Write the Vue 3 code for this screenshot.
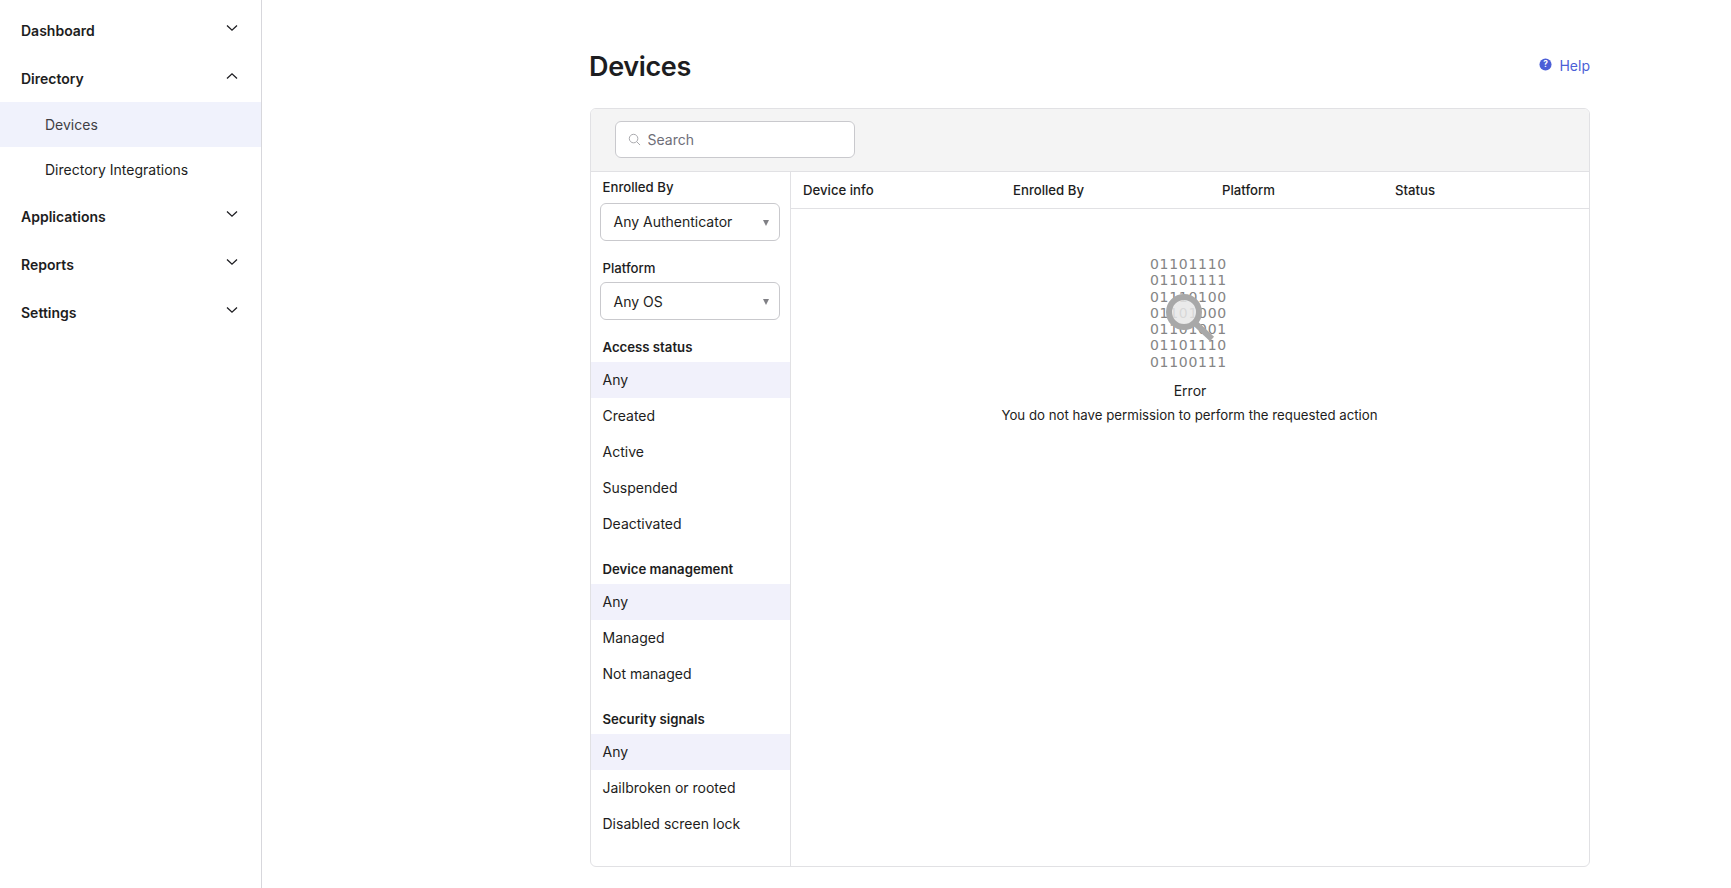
<template>
  <div class="layout">
    <aside class="sidebar">
      <template v-for="item in nav" :key="item.label">
        <div class="nav-head">
          <span>{{ item.label }}</span>
          <svg class="chevron" viewBox="0 0 12 8" :class="{ open: item.children }">
            <path d="M1 1.5 L6 6.2 L11 1.5" fill="none" stroke="#1d1d21" stroke-width="1.3" />
          </svg>
        </div>
        <div
          v-for="(child, i) in item.children"
          :key="child"
          class="nav-sub"
          :class="{ active: i === 0 }"
        >
          {{ child }}
        </div>
      </template>
    </aside>

    <main class="content">
      <div class="page-head">
        <h1>Devices</h1>
        <a class="help">
          <svg class="help-icon" viewBox="0 0 14 14">
            <circle cx="7" cy="7" r="6.5" fill="#4c5fd7" />
            <text x="7" y="10" text-anchor="middle" class="help-mark">?</text>
          </svg>
          Help
        </a>
      </div>

      <section class="panel">
        <div class="toolbar">
          <div class="search">
            <svg class="search-icon" viewBox="0 0 14 14">
              <circle cx="6" cy="6" r="4.6" fill="none" stroke="#a3a3a8" stroke-width="1" />
              <path d="M9.4 9.4 L13 13" stroke="#a3a3a8" stroke-width="1" />
            </svg>
            <input type="text" placeholder="Search" />
          </div>
        </div>

        <div class="panel-body">
          <div class="filters">
            <div class="filter-label first">Enrolled By</div>
            <div class="fake-select">Any Authenticator<span class="caret"></span></div>
            <div class="filter-label second">Platform</div>
            <div class="fake-select">Any OS<span class="caret"></span></div>

            <div v-for="group in filterGroups" :key="group.title" class="filter-group">
              <div class="group-title">{{ group.title }}</div>
              <div
                v-for="(opt, i) in group.options"
                :key="opt"
                class="filter-opt"
                :class="{ selected: i === 0 }"
              >
                {{ opt }}
              </div>
            </div>
          </div>

          <div class="table-area">
            <div class="table-head">
              <div class="col col-info">Device info</div>
              <div class="col col-enrolled">Enrolled By</div>
              <div class="col col-platform">Platform</div>
              <div class="col">Status</div>
            </div>
            <div class="empty">
              <div class="binary-wrap">
                <div v-for="line in binary" :key="line" class="binary-line">{{ line }}</div>
                <svg class="magnifier" viewBox="0 0 50 50">
                  <circle cx="18" cy="18" r="15" fill="#e6e6e6" fill-opacity="0.85" stroke="#a8a8a8" stroke-width="6" />
                  <path d="M30 30 L46 45" stroke="#a8a8a8" stroke-width="6" />
                </svg>
              </div>
              <div class="error-title">Error</div>
              <div class="error-msg">You do not have permission to perform the requested action</div>
            </div>
          </div>
        </div>
      </section>
    </main>
  </div>
</template>

<script setup>
const nav = [
  { label: 'Dashboard' },
  { label: 'Directory', children: ['Devices', 'Directory Integrations'] },
  { label: 'Applications' },
  { label: 'Reports' },
  { label: 'Settings' }
]

const filterGroups = [
  { title: 'Access status', options: ['Any', 'Created', 'Active', 'Suspended', 'Deactivated'] },
  { title: 'Device management', options: ['Any', 'Managed', 'Not managed'] },
  { title: 'Security signals', options: ['Any', 'Jailbroken or rooted', 'Disabled screen lock'] }
]

const binary = ['01101110', '01101111', '01110100', '01101000', '01101001', '01101110 ', '01100111']
</script>

<style>
html,
body {
  margin: 0;
  background: #fff;
  overflow: hidden;
}
</style>

<style scoped>
.layout {
  display: flex;
  height: 888px;
  font-family: Inter, "Noto Sans", sans-serif;
  font-size: 14px;
  color: #1d1d21;
}

.sidebar {
  width: 261px;
  flex-shrink: 0;
  border-right: 1px solid #d7d7dc;
  padding-top: 6px;
}

.nav-head {
  display: flex;
  align-items: center;
  justify-content: space-between;
  height: 48px;
  padding: 0 23px 0 21px;
  font-weight: 600;
}

.chevron {
  width: 12px;
  height: 8px;
  margin-top: -5px;
}

.chevron.open {
  transform: rotate(180deg);
}

.nav-sub {
  display: flex;
  align-items: center;
  height: 45px;
  padding-left: 45px;
}

.nav-sub.active {
  background: #f0f2fc;
  color: #3f3f45;
}

.content {
  flex: 1;
  padding: 0 141px 0 328px;
}

.page-head {
  display: flex;
  align-items: center;
  justify-content: space-between;
  height: 108px;
  padding-top: 32px;
  padding-bottom: 8px;
  box-sizing: border-box;
}

h1 {
  margin: 0 0 0 -1px;
  font-size: 27px;
  font-weight: 600;
  letter-spacing: -0.35px;
}

.help {
  display: flex;
  align-items: center;
  gap: 7px;
  margin-top: -2px;
  color: #4c5fd7;
}

.help-icon {
  width: 13px;
  height: 13px;
  margin-top: -2px;
}

.help-mark {
  fill: #fff;
  font-size: 9px;
  font-weight: 700;
}

.panel {
  height: 759px;
  box-sizing: border-box;
  border: 1px solid #e1e1e4;
  border-radius: 6px;
  overflow: hidden;
  display: flex;
  flex-direction: column;
}

.toolbar {
  height: 63px;
  flex-shrink: 0;
  box-sizing: border-box;
  background: #f4f4f4;
  border-bottom: 1px solid #e1e1e4;
  padding: 12px 24px;
}

.search {
  position: relative;
  width: 240px;
  height: 37px;
}

.search input {
  width: 100%;
  height: 100%;
  box-sizing: border-box;
  border: 1px solid #c9c9cd;
  border-radius: 6px;
  background: #fff;
  padding: 0 10px 0 31.5px;
  font: inherit;
  color: #1d1d21;
  outline: none;
}

.search input::placeholder {
  color: #6e6e78;
  opacity: 1;
}

.search-icon {
  position: absolute;
  left: 13px;
  top: 12px;
  width: 13px;
  height: 13px;
}

.panel-body {
  flex: 1;
  display: flex;
  min-height: 0;
}

.filters {
  width: 199px;
  flex-shrink: 0;
  border-right: 1px solid #e1e1e4;
}

.filter-label {
  padding-left: 11.5px;
  font-size: 13.2px;
  font-weight: 500;
  line-height: 18px;
}

.filter-label.first {
  margin-top: 6px;
  margin-bottom: 6.5px;
}

.filter-label.second {
  margin-top: 18.5px;
  margin-bottom: 5px;
}

.fake-select {
  position: relative;
  display: flex;
  align-items: center;
  height: 38px;
  box-sizing: border-box;
  margin: 0 10px 0 9px;
  padding-left: 12.5px;
  border: 1px solid #c9c9cd;
  border-radius: 6px;
  background: #fff;
}

.caret {
  position: absolute;
  right: 10px;
  top: 16px;
  width: 0;
  height: 0;
  border-left: 3.5px solid transparent;
  border-right: 3.5px solid transparent;
  border-top: 6px solid #808085;
}

.filter-group {
  margin-top: 18px;
}

.group-title {
  padding-left: 11.5px;
  font-size: 13.2px;
  font-weight: 600;
  line-height: 18px;
  margin-bottom: 6px;
}

.filter-opt {
  display: flex;
  align-items: center;
  height: 36px;
  box-sizing: border-box;
  padding: 0 0 1px 11.5px;
}

.filter-opt.selected {
  background: #f1f1fb;
}

.table-area {
  flex: 1;
  min-width: 0;
}

.table-head {
  display: flex;
  align-items: center;
  height: 37px;
  box-sizing: border-box;
  border-bottom: 1px solid #e1e1e4;
  padding-left: 12px;
  font-size: 13.2px;
  font-weight: 500;
}

.col-info {
  width: 210px;
}

.col-enrolled {
  width: 209px;
}

.col-platform {
  width: 173px;
}

.empty {
  display: flex;
  flex-direction: column;
  align-items: center;
  padding-top: 47px;
}

.binary-wrap {
  position: relative;
  margin-left: 2px;
  font-family: "DejaVu Sans", sans-serif;
  font-size: 14px;
  letter-spacing: 0.7px;
  line-height: 16.3px;
  color: #858585;
  white-space: pre;
}

.binary-line {
  height: 16.3px;
}

.magnifier {
  position: absolute;
  left: 16px;
  top: 38px;
  width: 50px;
  height: 50px;
}

.error-title {
  margin-top: 10px;
  line-height: 22px;
}

.error-msg {
  margin-top: 2px;
  margin-right: 1px;
  font-size: 13.25px;
  line-height: 22px;
}
</style>
